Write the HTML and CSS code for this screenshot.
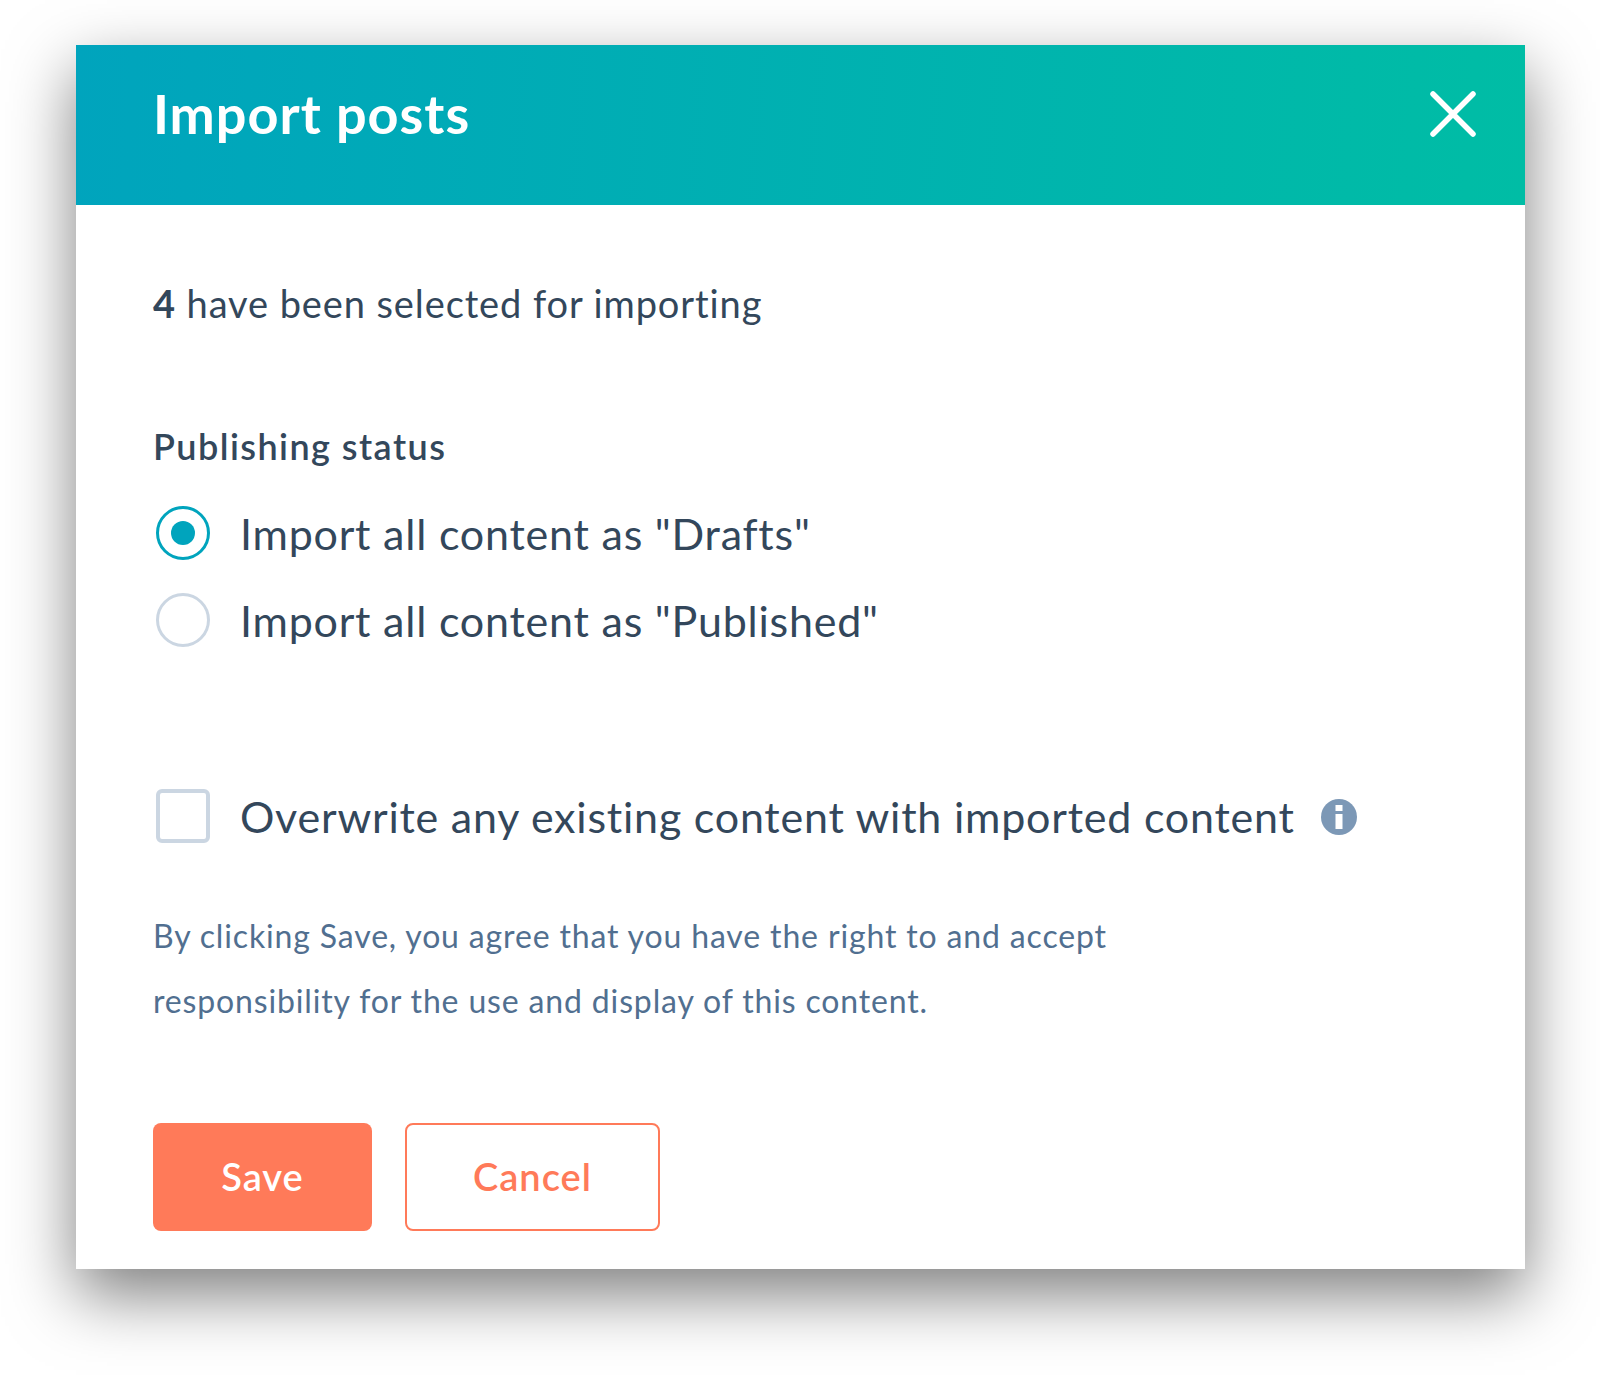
FILE: index.html
```html
<!DOCTYPE html>
<html>
<head>
    <title>Import posts</title>
    <link rel="stylesheet" href="styles.css">
</head>
<body>
    <div class="modal">
        <div class="modal-header">
            <h1>Import posts</h1>
            <svg class="close-icon" width="46" height="46" viewBox="0 0 46 46">
                <path d="M3 3L43 43M43 3L3 43" fill="none" stroke="#fff" stroke-width="5.5" stroke-linecap="round"/>
            </svg>
        </div>
        <div class="modal-body">
            <p class="selected-count"><strong>4</strong> have been selected for importing</p>
            <div class="section-label">Publishing status</div>
            <div class="option-row">
                <span class="radio radio-on"><span class="radio-dot"></span></span>
                <span class="option-text">Import all content as "Drafts"</span>
            </div>
            <div class="option-row">
                <span class="radio"></span>
                <span class="option-text">Import all content as "Published"</span>
            </div>
            <div class="option-row overwrite-row">
                <span class="checkbox"></span>
                <span class="option-text">Overwrite any existing content with imported content</span>
                <svg class="info-icon" width="36" height="36" viewBox="0 0 36 36">
                    <circle cx="18" cy="18" r="18" fill="#7c98b6"/>
                    <rect x="14.5" y="6" width="7" height="6" fill="#fff"/>
                    <rect x="14.5" y="15" width="7" height="15" fill="#fff"/>
                </svg>
            </div>
            <p class="legal-text">By clicking Save, you agree that you have the right to and accept<br>responsibility for the use and display of this content.</p>
            <div class="button-row">
                <button class="btn btn-save">Save</button>
                <button class="btn btn-cancel">Cancel</button>
            </div>
        </div>
    </div>
</body>
</html>
```

FILE: styles.css
```css
* {
    box-sizing: border-box;
}
body {
    margin: 0;
    height: 1375px;
    padding: 45px 75px 0 76px;
    background: white;
    font-family: Lato, "Open Sans", sans-serif;
    color: #33475b;
    overflow: hidden;
}
.modal {
    width: 1449px;
    height: 1224px;
    background: white;
    box-shadow: 0 26px 62px rgba(0,0,0,0.5);
}
.modal-header {
    height: 160px;
    padding: 0 49px 24px 77px;
    display: flex;
    align-items: center;
    justify-content: space-between;
    background: linear-gradient(94deg, #00a4bd, #00bda5);
}
.modal-header h1 {
    margin: 0;
    color: white;
    font-size: 54px;
    font-weight: 700;
    letter-spacing: 1px;
}
.close-icon {
    margin-top: 2px;
}
.modal-body {
    padding: 0 77px;
}
.selected-count {
    margin: 0;
    padding-top: 73px;
    font-size: 38px;
    line-height: 50px;
    letter-spacing: 0.9px;
}
.section-label {
    margin-top: 93px;
    font-size: 36px;
    font-weight: 600;
    line-height: 50px;
    letter-spacing: 1.45px;
}
.option-row {
    display: flex;
    align-items: center;
    height: 87px;
    padding-left: 3px;
    font-size: 43px;
    letter-spacing: 0.78px;
}
.section-label + .option-row {
    margin-top: 18px;
}
.option-text {
    margin-left: 30px;
    padding-top: 1px;
}
.radio {
    flex: none;
    width: 54px;
    height: 54px;
    border: 3px solid #cbd6e2;
    border-radius: 50%;
    display: flex;
    align-items: center;
    justify-content: center;
}
.radio-on {
    border-color: #00a4bd;
}
.radio-dot {
    width: 24px;
    height: 24px;
    border-radius: 50%;
    background: #00a4bd;
}
.overwrite-row {
    margin-top: 109px;
}
.checkbox {
    flex: none;
    width: 54px;
    height: 54px;
    border: 4px solid #cbd6e2;
    border-radius: 6px;
}
.info-icon {
    margin: 3px 0 0 26px;
}
.legal-text {
    margin: 44px 0 0;
    font-size: 32px;
    line-height: 65px;
    letter-spacing: 0.85px;
    color: #516f90;
}
.button-row {
    display: flex;
    gap: 33px;
    margin-top: 90px;
}
.btn {
    height: 108px;
    font-family: inherit;
    font-size: 38px;
    font-weight: 600;
    letter-spacing: 1px;
    border-radius: 8px;
    padding: 0 0 2px;
}
.btn-save {
    width: 219px;
    background: #ff7a59;
    border: none;
    color: white;
}
.btn-cancel {
    width: 255px;
    background: white;
    border: 2px solid #ff7a59;
    color: #ff7a59;
}
```
